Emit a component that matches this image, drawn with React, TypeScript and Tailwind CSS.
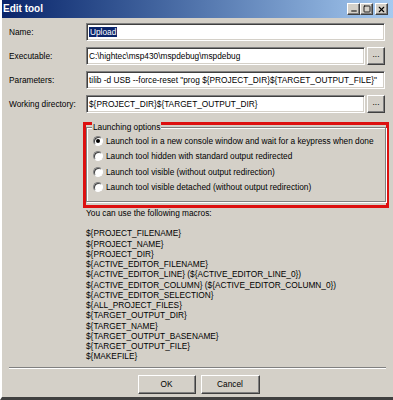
import { Minus, Square, X } from "lucide-react";

const macros = [
  "${PROJECT_FILENAME}",
  "${PROJECT_NAME}",
  "${PROJECT_DIR}",
  "${ACTIVE_EDITOR_FILENAME}",
  "${ACTIVE_EDITOR_LINE} (${ACTIVE_EDITOR_LINE_0})",
  "${ACTIVE_EDITOR_COLUMN} (${ACTIVE_EDITOR_COLUMN_0})",
  "${ACTIVE_EDITOR_SELECTION}",
  "${ALL_PROJECT_FILES}",
  "${TARGET_OUTPUT_DIR}",
  "${TARGET_NAME}",
  "${TARGET_OUTPUT_BASENAME}",
  "${TARGET_OUTPUT_FILE}",
  "${MAKEFILE}",
];

const options = [
  "Launch tool in a new console window and wait for a keypress when done",
  "Launch tool hidden with standard output redirected",
  "Launch tool visible (without output redirection)",
  "Launch tool visible detached (without output redirection)",
];

const sunken =
  "border-t border-l border-t-[#808080] border-l-[#808080] border-b border-r border-b-white border-r-white shadow-[inset_1px_1px_0_#404040,inset_-1px_-1px_0_#d4d0c8]";
const raised =
  "border border-t-white border-l-white border-b-[#404040] border-r-[#404040] shadow-[inset_-1px_-1px_0_#808080]";

function TitleButton({ children }: { children: React.ReactNode }) {
  return (
    <div className={`flex h-[12px] w-[13px] items-center justify-center bg-[#d4d0c8] ${raised}`}>{children}</div>
  );
}

function Field({ label, value, browse, selected }: { label: string; value: string; browse?: boolean; selected?: boolean }) {
  return (
    <div className="flex h-[18px] items-center">
      <span className="w-[77px] shrink-0">{label}</span>
      <div className={`flex h-[18px] flex-1 items-center overflow-hidden whitespace-nowrap bg-white pl-[2px] ${sunken}`}>
        {selected ? <span className="bg-[#0a246a] px-[1px] text-white">{value}</span> : value}
      </div>
      {browse && (
        <div className={`ml-[2px] flex h-[18px] w-[18px] shrink-0 items-center justify-center bg-[#d4d0c8] pb-[3px] ${raised}`}>...</div>
      )}
    </div>
  );
}

export default function App() {
  return (
    <div
      className="flex h-[400px] w-[393px] flex-col overflow-hidden border-b-[3px] border-l-[2px] border-b-[#404040] border-l-white bg-[#d4d0c8] text-[8.3px] leading-[10.25px] text-black"
      style={{ fontFamily: '"Liberation Sans", Arial, sans-serif' }}
    >
      <div className="flex h-[18px] shrink-0 items-center justify-between bg-gradient-to-r from-[#0a246a] to-[#a6caf0] pl-[1px] pr-[5px]">
        <span className="text-[10px] font-bold text-white">Edit tool</span>
        <div className="flex items-center">
          <TitleButton>
            <Minus size={8} strokeWidth={3} className="translate-y-[2px]" />
          </TitleButton>
          <TitleButton>
            <Square size={8} strokeWidth={2.5} />
          </TitleButton>
          <div className="ml-[2px]">
            <TitleButton>
              <X size={9} strokeWidth={3} />
            </TitleButton>
          </div>
        </div>
      </div>

      <div className="flex flex-col gap-[6px] pl-[7px] pr-[8px] pt-[5px]">
        <Field label="Name:" value="Upload" selected />
        <Field label="Executable:" value="C:\hightec\msp430\mspdebug\mspdebug" browse />
        <Field label="Parameters:" value={'tilib -d USB --force-reset "prog ${PROJECT_DIR}${TARGET_OUTPUT_FILE}"'} />
        <Field label="Working directory:" value="${PROJECT_DIR}${TARGET_OUTPUT_DIR}" browse />
      </div>

      <div className="ml-[81px] mr-[4px] mt-[9px] border-[3px] border-[#dd1010] pb-[3px] pt-[2px]">
        <div className="relative border border-[#808080] px-[6px] pb-[9px] pt-[8px] shadow-[1px_1px_0_white,inset_1px_1px_0_white]">
          <span className="absolute left-[5px] top-[-6px] bg-[#d4d0c8] px-[1px]">Launching options</span>
          <div className="flex flex-col gap-[5px]">
            {options.map((o, i) => (
              <div key={o} className="flex items-center gap-[3px]">
                <div className="flex h-[10px] w-[10px] shrink-0 items-center justify-center rounded-full border border-t-[#808080] border-l-[#808080] border-b-white border-r-white bg-white shadow-[inset_1px_1px_0_#404040]">
                  {i === 0 && <div className="h-[4px] w-[4px] rounded-full bg-black" />}
                </div>
                <span className="whitespace-nowrap">{o}</span>
              </div>
            ))}
          </div>
        </div>
      </div>

      <div className="ml-[84px] flex flex-col">
        <span>You can use the following macros:</span>
        <div className="mt-[10px] flex flex-col">
          {macros.map((m) => (
            <span key={m}>{m}</span>
          ))}
        </div>
      </div>

      <div className="mx-[7px] mt-[5px] border-t border-b border-t-[#808080] border-b-white" />

      <div className="mt-[6px] flex justify-center gap-[5px] pl-[2px]">
        <div className={`flex h-[19px] w-[58px] items-center justify-center bg-[#d4d0c8] ${raised}`}>OK</div>
        <div className={`flex h-[19px] w-[59px] items-center justify-center bg-[#d4d0c8] ${raised}`}>Cancel</div>
      </div>
    </div>
  );
}
